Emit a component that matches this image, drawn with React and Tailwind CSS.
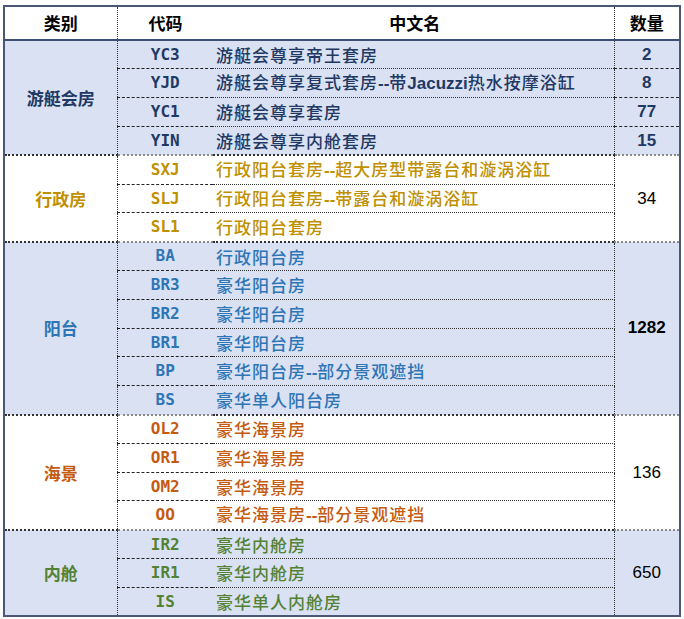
const groups = [
  {
    name: "游艇会房",
    color: "text-[#1f3864]",
    bg: "bg-[#d9e1f2]",
    total: null,
    rows: [
      { code: "YC3", label: "游艇会尊享帝王套房", qty: "2" },
      { code: "YJD", label: "游艇会尊享复式套房--带Jacuzzi热水按摩浴缸", qty: "8" },
      { code: "YC1", label: "游艇会尊享套房", qty: "77" },
      { code: "YIN", label: "游艇会尊享内舱套房", qty: "15" },
    ],
  },
  {
    name: "行政房",
    color: "text-[#bf9000]",
    bg: "bg-white",
    total: "34",
    totalClass: "font-normal",
    rows: [
      { code: "SXJ", label: "行政阳台套房--超大房型带露台和漩涡浴缸" },
      { code: "SLJ", label: "行政阳台套房--带露台和漩涡浴缸" },
      { code: "SL1", label: "行政阳台套房" },
    ],
  },
  {
    name: "阳台",
    color: "text-[#2e75b6]",
    bg: "bg-[#d9e1f2]",
    total: "1282",
    totalClass: "font-bold",
    rows: [
      { code: "BA", label: "行政阳台房" },
      { code: "BR3", label: "豪华阳台房" },
      { code: "BR2", label: "豪华阳台房" },
      { code: "BR1", label: "豪华阳台房" },
      { code: "BP", label: "豪华阳台房--部分景观遮挡" },
      { code: "BS", label: "豪华单人阳台房" },
    ],
  },
  {
    name: "海景",
    color: "text-[#c55a11]",
    bg: "bg-white",
    total: "136",
    totalClass: "font-normal",
    rows: [
      { code: "OL2", label: "豪华海景房" },
      { code: "OR1", label: "豪华海景房" },
      { code: "OM2", label: "豪华海景房" },
      { code: "OO", label: "豪华海景房--部分景观遮挡" },
    ],
  },
  {
    name: "内舱",
    color: "text-[#548235]",
    bg: "bg-[#d9e1f2]",
    total: "650",
    totalClass: "font-normal",
    rows: [
      { code: "IR2", label: "豪华内舱房" },
      { code: "IR1", label: "豪华内舱房" },
      { code: "IS", label: "豪华单人内舱房" },
    ],
  },
];

const cjk = "font-['Noto_Sans_CJK_SC',sans-serif]";
const mono = "font-['DejaVu_Sans_Mono','Liberation_Mono',monospace]";
const arial = "font-['Liberation_Sans',Arial,sans-serif]";

function Label({ text }) {
  // latin runs and dashes in the names are set in a plain bold sans
  const parts = text.split(/([A-Za-z-]+)/);
  return parts.map((p, i) =>
    /[A-Za-z-]/.test(p) ? (
      <span key={i} className={`${arial} font-bold tracking-normal`}>{p}</span>
    ) : (
      <span key={i}>{p}</span>
    )
  );
}

export default function App() {
  return (
    <div className="w-[684px] h-[619px] bg-white pt-[5px] pl-[3px]">
      <table className="border-collapse table-fixed w-[676px] border-2 border-[#4a5875]">
        <colgroup>
          <col className="w-[113px]" />
          <col className="w-[96px]" />
          <col className="w-[401px]" />
          <col className="w-[66px]" />
        </colgroup>
        <thead>
          <tr className="h-[34px] border-b-2 border-[#3d4f72]">
            <th className={`${cjk} font-semibold text-[17px] text-black border-r border-dotted border-[#333]`}>类别</th>
            <th className={`${cjk} font-semibold text-[17px] text-black text-left pl-[31px]`}>代码</th>
            <th className={`${cjk} font-semibold text-[17px] text-black pl-[3px] border-r border-dotted border-[#333]`}>中文名</th>
            <th className={`${cjk} font-semibold text-[17px] text-black`}>数量</th>
          </tr>
        </thead>
        <tbody>
          {groups.map((g, gi) =>
            g.rows.map((r, ri) => {
              const last = ri === g.rows.length - 1;
              const lastGroup = gi === groups.length - 1;
              const rowLine = last
                ? lastGroup
                  ? ""
                  : "border-b-2 border-dotted border-[#8a8a8a]"
                : "border-b border-dashed border-[#222]";
              return (
                <tr key={r.code} className={`h-[28.8px] ${g.bg}`}>
                  {ri === 0 && (
                    <td
                      rowSpan={g.rows.length}
                      className={`${cjk} font-bold text-[17px] text-center ${g.color} border-r border-dotted border-[#333] ${lastGroup ? "" : "border-b-2 border-dotted border-[#8a8a8a]"}`}
                    >
                      {g.name}
                    </td>
                  )}
                  <td className={`${mono} font-bold text-[16px] text-center ${g.color} ${rowLine}`}>{r.code}</td>
                  <td className={`${cjk} font-medium text-[17px] tracking-[1px] whitespace-nowrap pl-[3px] ${g.color} border-r border-dotted border-[#333] ${rowLine}`}>
                    <Label text={r.label} />
                  </td>
                  {g.total === null ? (
                    <td className={`${arial} font-bold text-[17px] text-center text-[#1f3864] ${rowLine}`}>{r.qty}</td>
                  ) : (
                    ri === 0 && (
                      <td
                        rowSpan={g.rows.length}
                        className={`${arial} ${g.totalClass} text-[17px] text-center text-black ${lastGroup ? "" : "border-b-2 border-dotted border-[#8a8a8a]"}`}
                      >
                        {g.total}
                      </td>
                    )
                  )}
                </tr>
              );
            })
          )}
        </tbody>
      </table>
    </div>
  );
}
